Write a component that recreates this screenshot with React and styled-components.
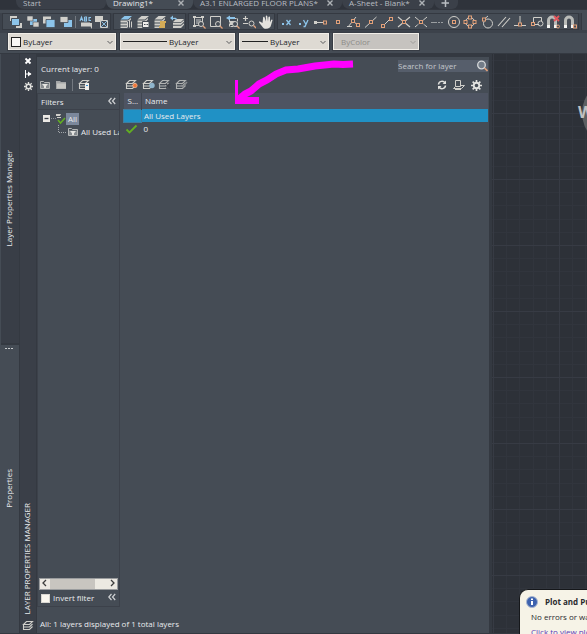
import React, { useState } from 'react';
import styled, { createGlobalStyle } from 'styled-components';

const GlobalStyle = createGlobalStyle`
  * { box-sizing: border-box; }
  body {
    margin: 0;
    background: #454c55;
    color: #e9ebed;
    font: 8px/12px 'Open Sans', 'Noto Sans', sans-serif;
  }
  button, input, select { font: inherit; color: inherit; margin: 0; }
  button { background: none; border: 0; padding: 0; }
`;

const Page = styled.div`
  position: relative;
  display: flex;
  flex-direction: column;
  min-height: 100vh;
  overflow: hidden;
`;

/* ---------- file tabs ---------- */
const TabStrip = styled.nav`
  display: flex;
  height: 10px;
  background: #2f333b;
  border-bottom: 1px solid #33373f;
  padding-left: 16px;
`;

const FileTab = styled.button`
  display: flex;
  align-items: center;
  justify-content: space-between;
  flex: none;
  width: ${(p) => p.$w}px;
  height: 9px;
  padding: 0 8px 3px 7px;
  line-height: 6px;
  white-space: nowrap;
  border-radius: 0 0 6px 8px;
  background: ${(p) => (p.$active ? '#454c55' : '#3b4049')};
  color: ${(p) => (p.$active ? '#e4e6e8' : '#b9bdc2')};
`;

/* ---------- toolbars ---------- */
const ToolRow = styled.div`
  display: flex;
  gap: 2px;
  height: 20px;
  padding-left: 2px;
  margin-top: 3px;
  background: #3c424b;
`;

const ToolGroup = styled.div`
  display: flex;
  align-items: center;
  justify-content: space-between;
  flex: none;
  width: ${(p) => p.$w}px;
  height: 17px;
  padding: 0 1px 0 ${(p) => p.$lead}px;
  background: #454c55;
  border: 1px solid #343941;
`;

const Filler = styled.div`
  flex: 1;
  height: 17px;
  background: #454c55;
  border-left: 1px solid #343941;
`;

const IconButton = styled.button`
  display: flex;
  flex: none;
  width: ${(p) => p.$w || 14}px;
  height: 14px;
  align-items: center;
  justify-content: center;
`;

const Divider = styled.span`
  width: 1px;
  height: 12px;
  background: #737980;
`;

const PropertyRow = styled.div`
  display: flex;
  gap: 4px;
  height: 20px;
  padding-left: 8px;
`;

const Combo = styled.label`
  display: flex;
  align-items: center;
  gap: 2px;
  width: ${(p) => p.$w}px;
  height: 17px;
  padding: 0 1px 0 2px;
  background: ${(p) => (p.$off ? '#c6c3bf' : '#dedad3')};
  border: 1px solid #f1eee8;
  outline: 1px solid #383d45;
  color: ${(p) => (p.$off ? '#8d8b88' : '#22242a')};

  select {
    flex: 1;
    min-width: 0;
    padding: 0 0 0 ${(p) => p.$indent || 0}px;
    border: 0;
    background: none;
    appearance: none;
    opacity: 1;
  }
`;

const Swatch = styled.span`
  width: 10px;
  height: 10px;
  border: 1px solid #222;
  background: #faf8f5;
`;

const LineSample = styled.span`
  width: ${(p) => p.$w}px;
  height: 1px;
  background: #222;
`;

/* ---------- work area ---------- */
const Work = styled.div`
  display: flex;
  flex: 1;
  padding-bottom: 1px;
  border-top: 1px solid #343941;
  background: #343941;
`;

const Rail = styled.div`
  display: flex;
  flex-direction: column;
  flex: none;
  gap: 2px;
  width: 20px;
  padding-right: 1px;
  border-left: 1px solid #454c55;
`;

const RailTab = styled.button`
  position: relative;
  flex: 1;
  display: flex;
  align-items: center;
  justify-content: center;
  padding-right: 2px;
  background: ${(p) => (p.$light ? '#454c55' : '#393e47')};

  span {
    writing-mode: vertical-rl;
    transform: rotate(180deg);
    line-height: 14px;
  }

  svg {
    position: absolute;
    top: 2px;
    left: 4px;
  }
`;

const Palette = styled.section`
  display: flex;
  flex: none;
  width: 471px;
`;

const TitleBar = styled.header`
  display: flex;
  flex-direction: column;
  align-items: center;
  width: 16px;
  padding-bottom: 1px;
  background: #3a3f48;
`;

const TitleButton = styled.button`
  display: flex;
  align-items: center;
  justify-content: center;
  width: 16px;
  height: 13px;
`;

const VerticalTitle = styled.h1`
  margin: auto 0 6px;
  padding-left: 2px;
  font-size: 8px;
  font-weight: 400;
  line-height: 14px;
  writing-mode: vertical-rl;
  transform: rotate(180deg);
`;

const PaletteBody = styled.div`
  display: flex;
  flex-direction: column;
  flex: 1;
  min-width: 0;
  margin: 3px 2px 0 1px;
  padding-right: 1px;
  background: #454c55;
`;

const TopLine = styled.div`
  display: flex;
  justify-content: space-between;
  padding: 3px 0 0 4px;
  height: 20px;

  p { margin: 3px 0 0; }
`;

const SearchBox = styled.label`
  display: flex;
  align-items: center;
  width: 90px;
  height: 12px;
  background: #565e6b;

  input {
    flex: 1;
    min-width: 0;
    height: 12px;
    padding: 0;
    border: 0;
    background: none;
  }
  input::placeholder { color: #c3c7cc; opacity: 1; }
`;

const LayerTools = styled.div`
  display: flex;
  align-items: center;
  height: 16px;
  padding-right: 4px;
`;

const ToolSpacer = styled.span`
  width: ${(p) => p.$w}px;
  flex: ${(p) => (p.$w ? 'none' : 1)};
`;

const Split = styled.div`
  display: flex;
  flex: 1;
  gap: 3px;
`;

const FilterPane = styled.aside`
  display: flex;
  flex-direction: column;
  width: 83px;
  border: 1px solid #3c414a;
`;

const PaneHead = styled.div`
  display: flex;
  align-items: center;
  justify-content: space-between;
  height: 16px;
  padding: 0 3px;
  border-bottom: 1px solid #3c414a;
`;

const Tree = styled.ul`
  flex: 1;
  margin: 0;
  padding: 2px 0 0 5px;
  list-style: none;
  overflow: hidden;
`;

const TreeItem = styled.li`
  display: flex;
  align-items: center;
  height: 13px;
  padding-left: ${(p) => p.$indent || 0}px;
  white-space: nowrap;

  svg { flex: none; }
`;

const TreeLabel = styled.span`
  padding: 0 2px;
  background: ${(p) => (p.$selected ? '#7b879b' : 'transparent')};
`;

const ScrollTrack = styled.div`
  display: flex;
  align-items: center;
  height: 12px;
  margin: 0 1px;
  background: #ece9e2;
  border: 1px solid #9a9c9e;
`;

const ScrollThumb = styled.span`
  flex: 1;
  height: 10px;
  margin-right: 12px;
  background: #c8c5c0;
`;

const InvertRow = styled.div`
  display: flex;
  align-items: center;
  justify-content: space-between;
  height: 16px;
  padding: 0 3px;

  label { display: flex; align-items: center; gap: 3px; }
  input {
    width: 9px;
    height: 9px;
    appearance: none;
    background: #fbf8f0;
    border: 1px solid #d9d7d2;
  }
`;

const LayerTable = styled.table`
  flex: 1;
  align-self: flex-start;
  border-collapse: collapse;
  table-layout: fixed;
  text-align: left;

  th {
    height: 16px;
    padding: 0 3px;
    background: #4e5462;
    font-weight: 400;
  }
  th:first-child {
    width: 18px;
    padding: 0 0 0 4px;
    border-right: 1px solid #3f4550;
    white-space: nowrap;
  }
  td { height: 13px; padding: 0 2px; line-height: 12px; }
  td:first-child { padding: 0 1px; }
  td svg { display: block; }
`;

const LayerRow = styled.tr`
  background: ${(p) => (p.$selected ? '#2091c5' : 'transparent')};

  td:first-child { border: ${(p) => (p.$selected ? '1px solid #3f7ea0' : '0')}; }
`;

const StatusLine = styled.footer`
  height: 26px;
  padding: 11px 0 0 3px;
`;

const Canvas = styled.main`
  position: relative;
  flex: 1;
  overflow: hidden;
  margin-left: 1px;
  background-color: #2d3138;
  background-image:
    linear-gradient(#373b44 1px, transparent 1px),
    linear-gradient(90deg, #373b44 1px, transparent 1px),
    linear-gradient(transparent 13px, #31353d 13px 14px, transparent 14px 26px, #31353d 26px 27px, transparent 27px 40px, #31353d 40px 41px, transparent 41px 53px, #31353d 53px 54px, transparent 54px),
    linear-gradient(90deg, transparent 13px, #31353d 13px 14px, transparent 14px 26px, #31353d 26px 27px, transparent 27px 40px, #31353d 40px 41px, transparent 41px 53px, #31353d 53px 54px, transparent 54px);
  background-size: 66px 66px;
  background-position: 1px 59px;
`;

const Compass = styled.div`
  position: absolute;
  top: 26px;
  left: 90px;
  width: 66px;
  height: 66px;
  border-radius: 50%;
  background: #5c5f62;
`;

const CompassLabel = styled.span`
  position: absolute;
  top: 49px;
  left: 86px;
  font-size: 16px;
  font-weight: 700;
  line-height: 18px;
  color: #c0c1c2;
`;

const Balloon = styled.aside`
  position: absolute;
  right: 0;
  bottom: 0;
  width: 68px;
  height: 45px;
  padding: 5px 0 0 11px;
  overflow: hidden;
  white-space: nowrap;
  background: #f6f3e7;
  border: solid #15171a;
  border-width: 1px 0 0 1px;
  border-top-left-radius: 9px;
  color: #2a2b2e;

  h2 {
    display: flex;
    align-items: center;
    gap: 7px;
    margin: 0 0 0 -5px;
    font-size: 8px;
    line-height: 14px;
  }
  h2 svg { flex: none; }
  p { margin: 2px 0 3px; }
  a { color: #5a35b8; text-decoration: none; }
`;

const Markup = styled.svg`
  position: absolute;
  top: 58px;
  left: 232px;
  pointer-events: none;
`;

/* ---------- drawings ---------- */
const G = '#d0cfca';
const B = '#8cc4ea';
const O = '#e2a079';

const Svg = ({ w = 14, h = 14, children }) => (
  <svg width={w} height={h} viewBox={`0 0 ${w} ${h}`} fill="none" stroke="none" aria-hidden="true">
    {children}
  </svg>
);

const Node = ({ x, y, s = 3 }) => (
  <rect x={x} y={y} width={s} height={s} stroke={O} strokeWidth="1" fill="#454c55" />
);

const Sheets = ({ top = G }) => (
  <>
    <path d="M5.500 1H13l-4 3.500H1.500z" fill={top} />
    <path d="M1.500 5.500H9l3-2.500v1.500L9 7.500H1.500zM1.500 8.500H9l3-2.500v1.500l-3 3H1.500zM1.500 11.500H9l3-2.500v1.500L9.500 13h-8z" fill={G} />
  </>
);

const Plies = ({ color = G }) => (
  <path d="M4.500 1.500h6l-3 3h-6zM1.500 4.500V7h6l3-3M1.500 7v2.500h6l3-3" stroke={color} strokeWidth="1.100" />
);

const Chevron = ({ color = '#5a5b5d' }) => (
  <Svg w={8} h={8}><path d="M1.500 3l2.500 2.500L6.500 3" stroke={color} /></Svg>
);

const Collapse = () => (
  <Svg w={8} h={8}><path d="M3.500 1L.8 4l2.700 3M7.200 1L4.500 4l2.700 3" stroke="#d0d2d4" strokeWidth="1.200" /></Svg>
);

const Cross = ({ color = '#aeb2b6', s = 1.4 }) => (
  <Svg w={8} h={8}><path d="M1.500 1.500l5 5M6.500 1.500l-5 5" stroke={color} strokeWidth={s} /></Svg>
);

const Gear = ({ size = 12 }) => (
  <svg width={size} height={size} viewBox="0 0 12 12" fill="none" aria-hidden="true">
    <circle cx="6" cy="6" r="3" stroke="#e2e2df" strokeWidth="2" />
    <path d="M6 0v2.500M6 9.500V12M0 6h2.500M9.500 6H12M1.800 1.800l1.700 1.700M8.500 8.500l1.700 1.700M10.200 1.800L8.500 3.500M3.500 8.500l-1.700 1.700" stroke="#e2e2df" strokeWidth="1.800" />
  </svg>
);

const Folder = () => (
  <Svg w={12} h={12}>
    <path d="M1 3V2h4l1 1h5v7H1z" fill="#a4a6a7" />
    <path d="M2 4.500h9v5H2z" fill="#c6c6c3" />
  </Svg>
);

const FilterFolder = () => (
  <Svg w={12} h={12}>
    <path d="M1.500 9.500v-7h3l1 1h5v6z" stroke="#b4b6b6" />
    <path d="M2 4.500h8V9H2z" fill="#858a8e" />
    <path d="M3 5h6L7 7.200V9H5V7.200z" fill="#e4e4e1" />
  </Svg>
);

const Tick = () => (
  <Svg w={13} h={12}>
    <path d="M1.500 6.500l3 3L11.500 2.500" stroke="#62ae22" strokeWidth="1.800" />
  </Svg>
);

const Magnet = () => <path d="M2.500 11V5.500a3.500 3.500 0 017 0V11" stroke="#b9bbb8" strokeWidth="3" />;
const MagnetTips = () => <path d="M1 10h3v3H1zM8 10h3v3H8z" fill="#f5f5f3" />;

const Lens = ({ x = 9, y = 9 }) => (
  <>
    <circle cx={x} cy={y} r="2.500" stroke={G} fill="#454c55" />
    <path d={`M${x + 2} ${y + 2}l2.500 2.500`} stroke={O} strokeWidth="1.300" />
  </>
);

const orderTools = [
  ['Bring to front', <><path d="M1 1h7v5H1zM7 8h6v5H7z" fill={G} /><path d="M2.500 3.500h8v7h-8z" fill={B} stroke="#454c55" /></>],
  ['Send to back', <><path d="M4 4h7v6H4z" fill={B} /><path d="M1 1h6v5H1zM7 7h6v5H7z" fill={G} stroke="#454c55" strokeWidth=".6" /></>],
  ['Bring above', <><path d="M1 1.500h8v7H1z" fill={G} /><path d="M4 4.500h9v8H4z" fill={B} stroke="#454c55" strokeWidth=".8" /></>],
  ['Send under', <><path d="M5 5h8v7H5z" fill={B} /><path d="M1 1.500h8v6H1z" fill={G} stroke="#454c55" strokeWidth=".8" /></>],
];

const textTools = [
  ['Text to front', <><path d="M1 6l1.500-4L4 6M2 4.500h2M5.500 2v4h2V2h-2M5.500 4h2M12 2.500h-2v3h2" stroke={B} strokeWidth="1.100" /><path d="M2 7.500h9v4H2z" fill={G} /><path d="M9 8h4v6" fill={G} /></>],
  ['Hatch to back', <><path d="M0 1h8v6H0z" fill={G} /><path d="M5.500 5.500h7v7h-7z" fill="#454c55" stroke={G} /><path d="M6 12l6-6M6.500 6.500L12 12" stroke={B} strokeWidth=".9" /></>],
];

const layerTools = [
  ['Layer properties', <><Sheets top={B} /><path d="M8 6h5v7H8z" fill="#454c55" /><path d="M8.500 6.500v6M10.500 5.500v7M12.500 6.500v6" stroke={G} /></>],
  ['Layer states', <><Sheets /><path d="M6.500 6.500H13v6H6.500z" fill="#f0efec" stroke="#454c55" /><path d="M8 9.500h1.500M10.500 9.500H12" stroke="#454c55" /></>],
  ['Layer match', <><Sheets /><path d="M7 6h6v2h-1v5H6v-2h1z" fill="#d3ab57" /></>],
  ['Layer previous', <><path d="M6 4h8l-3 3H3zM3 7.700h8l3-2.500v1.500l-3 3H3zM3 10.700h8l3-2.500v1.500L11 13H3z" fill={G} /><path d="M7 5c0-3-3-2-4-2V.5L0 3l3 2.500V4c2 0 3 0 4 1z" fill={B} /></>],
];

const viewTools = [
  ['Zoom extents', <><path d="M2.500 2.500h8v8h-8z" stroke={G} /><path d="M4 4h5v5H4z" fill="#858a8e" /><path d="M1 1h3v2H1zM9 1h3v2H9zM1 10h3v2H1z" fill={G} /><Lens /></>],
  ['Zoom window', <><path d="M1.500 1.500h10v10h-10z" stroke={G} /><Lens /></>],
  ['Zoom previous', <><path d="M3.500 3.500h8v8h-8z" stroke={G} strokeDasharray="3 1" /><path d="M4 6h5v4H4z" fill={G} /><path d="M0 3l4-2.500V2h5v2H4v1.500z" fill={B} /><Lens /></>],
  ['Zoom realtime', <><path d="M1 3.500h5M3.500 1v5M1 8.500h5" stroke={G} strokeWidth="1.200" /><Lens x={9.5} y={8.5} /></>],
  ['Pan', <path d="M3.500 8L1 6.500c-1-.5-1.500.7-.6 1.500L4 12.500c.5.800 1.500 1.300 3 1.300 3 0 4.500-1.300 5-3.500l1.500-5c.2-1-1-1.200-1.400-.2L11 7.500V2.200c0-1-1.500-1-1.600 0L9 6.500 8.300 1.200c-.1-1-1.600-1-1.500.1L7 6.500 5.500 2.300c-.3-.9-1.600-.5-1.400.4z" fill="#e4e2de" />],
];

const snapTools = [
  ['Track x', <><path d="M1 8h2v2H1z" fill={B} /><path d="M5.500 5l4 5M9.500 5l-4 5" stroke={B} strokeWidth="1.300" /></>],
  ['Track y', <><path d="M1 8h2v2H1z" fill={B} /><path d="M5.500 5l2.500 4.500M10 5l-3 6.500H5.500" stroke={B} strokeWidth="1.300" /></>],
  ['Temporary track', <><path d="M1 7.500h8" stroke={G} /><path d="M0 6h3v3H0z" fill={G} /><Node x={9.5} y={6} /></>],
  ['Snap from', <Node x={5.5} y={5.5} s={3} />],
  ['Endpoint', <><path d="M1 12L9 2M6 6l7 6M0 11.500h5" stroke={G} /><Node x={4.5} y={4.5} /><Node x={9.5} y={8.5} /></>],
  ['Midpoint', <><path d="M1 12.500L12.500 2" stroke={G} /><Node x={5.500} y={5.500} s={3} /></>],
  ['Segment end', <><path d="M3 11l7-7" stroke={G} /><Node x={9.5} y={2.5} /><Node x={1.500} y={9.500} /></>],
  ['Intersection', <><path d="M1 2l12 10M13 2L1 12" stroke={G} strokeWidth="1.100" /><Node x={5.500} y={5.500} /></>],
  ['Apparent intersection', <><path d="M1 2l12 10M13 2L1 12" stroke={G} strokeDasharray="5 1" /><Node x={5.500} y={5.500} /></>],
  ['Extension', <path d="M1 7.500h6M8 7.500h2M11 7.500h2" stroke="#9a9ea1" />],
  ['Center', <><circle cx="7" cy="7" r="5.500" stroke={G} /><Node x={5.500} y={5.500} /></>],
  ['Quadrant', <><circle cx="7" cy="7" r="4.500" stroke={G} /><Node x={5.500} y={1} /><Node x={5.500} y={10} /><Node x={1} y={5.500} /><Node x={10} y={5.500} /></>],
  ['Tangent', <><circle cx="8" cy="8.500" r="4.500" stroke={G} /><path d="M2 6l6-5" stroke={G} /><Node x={2.500} y={3} /></>],
  ['Parallel', <path d="M1 11l8-9M5 12l8-9" stroke={G} strokeWidth="1.100" />],
  ['Perpendicular', <><path d="M7 1v10M1 10.500h12" stroke={G} /><Node x={5.500} y={8} /></>],
  ['Insertion', <><path d="M3.500 7V2.500h8V6" stroke={G} /><circle cx="10.500" cy="8.500" r="2.500" stroke={G} /><path d="M3 9.500h6" stroke={G} /><Node x={1.500} y={7.500} /></>],
  ['No snap', <><Magnet /><MagnetTips /><path d="M8 1l5 5M13 1L8 6" stroke="#e2555c" strokeWidth="1.800" /><circle cx="12" cy="11.500" r="1.500" stroke={O} /></>],
  ['Snap settings', <><Magnet /><MagnetTips /><Node x={10.500} y={10} /></>],
];

const Tools = ({ items }) => items.map(([name, art]) => (
  <IconButton key={name} aria-label={name}><Svg>{art}</Svg></IconButton>
));

const tabs = [
  { name: 'Start', w: 90 },
  { name: 'Drawing1*', w: 87, active: true, close: true },
  { name: 'A3.1 ENLARGED FLOOR PLANS*', w: 149, close: true },
  { name: 'A-Sheet - Blank*', w: 92, close: true },
];

const App = () => {
  const [invert, setInvert] = useState(false);
  const [query, setQuery] = useState('');

  return (
    <Page>
      <GlobalStyle />
      <TabStrip>
        {tabs.map((t) => (
          <FileTab key={t.name} $w={t.w} $active={t.active}>
            {t.name}
            {t.close && <Cross />}
          </FileTab>
        ))}
        <FileTab $w={24} aria-label="New tab">
          <Svg w={8} h={8}><path d="M4.500 0v8M.5 4h8" stroke="#b9bdc2" strokeWidth="1.500" /></Svg>
        </FileTab>
      </TabStrip>

      <ToolRow>
        <ToolGroup $w={109} $lead={6}>
          <Tools items={orderTools} />
          <Divider />
          <Tools items={textTools} />
        </ToolGroup>
        <ToolGroup $w={73} $lead={5}><Tools items={layerTools} /></ToolGroup>
        <ToolGroup $w={87} $lead={3}><Tools items={viewTools} /></ToolGroup>
        <ToolGroup $w={302} $lead={3}><Tools items={snapTools} /></ToolGroup>
        <Filler />
      </ToolRow>

      <PropertyRow>
        <Combo $w={108}>
          <Swatch />
          <select aria-label="Color"><option>ByLayer</option></select>
          <Chevron />
        </Combo>
        <Combo $w={115}>
          <LineSample $w={44} />
          <select aria-label="Linetype"><option>ByLayer</option></select>
          <Chevron />
        </Combo>
        <Combo $w={90}>
          <LineSample $w={26} />
          <select aria-label="Lineweight"><option>ByLayer</option></select>
          <Chevron />
        </Combo>
        <Combo $w={86} $off $indent={5}>
          <select aria-label="Plot style" disabled><option>ByColor</option></select>
          <Chevron color="#a09e9b" />
        </Combo>
      </PropertyRow>

      <Work>
        <Rail>
          <RailTab><span>Layer Properties Manager</span></RailTab>
          <RailTab $light>
            <Svg w={8} h={3}><path d="M0 1.500h8" stroke="#c9cbcd" strokeDasharray="2 1" /></Svg>
            <span>Properties</span>
          </RailTab>
        </Rail>

        <Palette>
          <TitleBar>
            <TitleButton aria-label="Close"><Cross color="#fff" s={1.8} /></TitleButton>
            <TitleButton aria-label="Auto-hide">
              <Svg w={8} h={8}><path d="M1.500 0v8M2 4h5" stroke="#fff" /><path d="M4 1.500v5L7.500 4z" fill="#fff" /></Svg>
            </TitleButton>
            <TitleButton aria-label="Properties"><Gear size={9} /></TitleButton>
            <VerticalTitle>LAYER PROPERTIES MANAGER</VerticalTitle>
            <Svg w={12} h={12}><Plies /></Svg>
          </TitleBar>

          <PaletteBody>
            <TopLine>
              <p>Current layer: 0</p>
              <SearchBox>
                <input
                  aria-label="Search for layer"
                  placeholder="Search for layer"
                  value={query}
                  onChange={(e) => setQuery(e.target.value)}
                />
                <Svg w={12} h={12}>
                  <circle cx="5.500" cy="5" r="3.800" stroke="#d5d8da" strokeWidth="1.300" fill="#737c88" />
                  <path d="M8.500 8l3 3" stroke={O} strokeWidth="1.600" />
                </Svg>
              </SearchBox>
            </TopLine>

            <LayerTools>
              <IconButton $w={16} aria-label="New property filter"><FilterFolder /></IconButton>
              <IconButton $w={16} aria-label="New group filter"><Folder /></IconButton>
              <ToolSpacer $w={3} />
              <Divider />
              <ToolSpacer $w={3} />
              <IconButton $w={16} aria-label="Layer states manager">
                <Svg w={12} h={12}><path d="M4.500 1.500h6l-3 3h-6zM1.500 4.500V7h6M1.500 7v2.500h6" stroke={G} strokeWidth="1.100" /><path d="M7 4h4v7H7z" fill="#f0efec" /><path d="M8 6.500h2" stroke="#3c8fd0" /></Svg>
              </IconButton>
              <ToolSpacer $w={31} />
              <IconButton $w={17} aria-label="New layer"><Svg w={13} h={12}><Plies /><circle cx="10" cy="6.500" r="2.200" fill="#f0763a" stroke="#f5c49a" strokeWidth=".6" /></Svg></IconButton>
              <IconButton $w={16} aria-label="New frozen layer"><Svg w={13} h={12}><Plies /><circle cx="10" cy="6.500" r="2.700" fill="#8fb5cc" /></Svg></IconButton>
              <IconButton $w={17} aria-label="Delete layer"><Svg w={13} h={12}><Plies color="#b0b2b1" /><path d="M8 5l4 4M12 5L8 9" stroke="#3a3f47" strokeWidth="1.500" /></Svg></IconButton>
              <IconButton $w={16} aria-label="Set current"><Svg w={13} h={12}><Plies color="#b0b2b1" /><path d="M6 6l2 2 4-5" stroke="#85898c" strokeWidth="1.500" /></Svg></IconButton>
              <ToolSpacer />
              <IconButton $w={16} aria-label="Refresh">
                <Svg w={10} h={10}><path d="M1.500 4.500A3.500 3.500 0 018 3M8.500 5.500A3.500 3.500 0 012 7" stroke="#e2e2df" strokeWidth="1.500" /><path d="M9 .5V4H5.500zM1 9.500V6h3.500z" fill="#e2e2df" /></Svg>
              </IconButton>
              <IconButton $w={18} aria-label="Toggle override highlight">
                <Svg w={12} h={12}><path d="M2.500 1.500h5v6h-5zM7.500 6.500h4l-3 3h-8l2-2M2 10.500h6" stroke={G} /></Svg>
              </IconButton>
              <IconButton $w={16} aria-label="Settings"><Gear size={11} /></IconButton>
            </LayerTools>

            <Split>
              <FilterPane>
                <PaneHead>
                  Filters
                  <button aria-label="Collapse filter tree"><Collapse /></button>
                </PaneHead>
                <Tree>
                  <TreeItem>
                    <Svg w={23} h={13}>
                      <path d="M0 3h7v7H0z" fill="#eceae6" />
                      <path d="M1.500 6.500h4" stroke="#3a3f48" strokeWidth="1.300" />
                      <path d="M8 6.500h5" stroke="#8d9297" strokeDasharray="1 1" />
                      <path d="M13 2h5l-1 2h-4zM14 5h4v1h-4z" fill={G} />
                      <path d="M15 8l2.500 3L22 6" stroke="#62ae22" strokeWidth="1.500" />
                    </Svg>
                    <TreeLabel $selected>All</TreeLabel>
                  </TreeItem>
                  <TreeItem $indent={15}>
                    <Svg w={9} h={13}><path d="M.5 0v7M1 7.500h8" stroke="#a3a7ab" strokeDasharray="1 1" /></Svg>
                    <FilterFolder />
                    <TreeLabel>All Used Layers</TreeLabel>
                  </TreeItem>
                </Tree>
                <ScrollTrack>
                  <button aria-label="Scroll left"><Svg w={10} h={8}><path d="M6 1L3 4l3 3" stroke="#3c3c3c" strokeWidth="1.300" /></Svg></button>
                  <ScrollThumb />
                  <button aria-label="Scroll right"><Svg w={10} h={8}><path d="M4 1l3 3-3 3" stroke="#3c3c3c" strokeWidth="1.300" /></Svg></button>
                </ScrollTrack>
                <InvertRow>
                  <label>
                    <input type="checkbox" checked={invert} onChange={() => setInvert(!invert)} />
                    Invert filter
                  </label>
                  <button aria-label="Collapse pane"><Collapse /></button>
                </InvertRow>
              </FilterPane>

              <LayerTable>
                <thead>
                  <tr><th>S...</th><th>Name</th></tr>
                </thead>
                <tbody>
                  <LayerRow $selected><td /><td>All Used Layers</td></LayerRow>
                  <LayerRow><td><Tick /></td><td>0</td></LayerRow>
                </tbody>
              </LayerTable>
            </Split>

            <StatusLine>All: 1 layers displayed of 1 total layers</StatusLine>
          </PaletteBody>
        </Palette>

        <Canvas>
          <Compass />
          <CompassLabel>W</CompassLabel>
        </Canvas>
      </Work>

      <Balloon>
        <h2>
          <Svg w={12} h={12}>
            <circle cx="6" cy="6" r="5.500" fill="#3d62ae" stroke="#a9b6cf" />
            <path d="M5 5h2v4H5zM5 2.500h2v1.500H5z" fill="#fff" />
          </Svg>
          Plot and Publish Job Complete
        </h2>
        <p>No errors or warnings found</p>
        <a href="#details">Click to view plot and publish details...</a>
      </Balloon>

      <Markup width="124" height="50" viewBox="232 58 124 50" fill="none">
        <path d="M353 64l-10 .5-9-.5-19 2-17 3-12 1-10 4-9 6-8 4-8 7-6 3-7 6" stroke="#f0f" strokeWidth="7" />
        <path d="M235 80h3v17h21v7h-24z" fill="#f0f" />
      </Markup>
    </Page>
  );
};

export default App;
